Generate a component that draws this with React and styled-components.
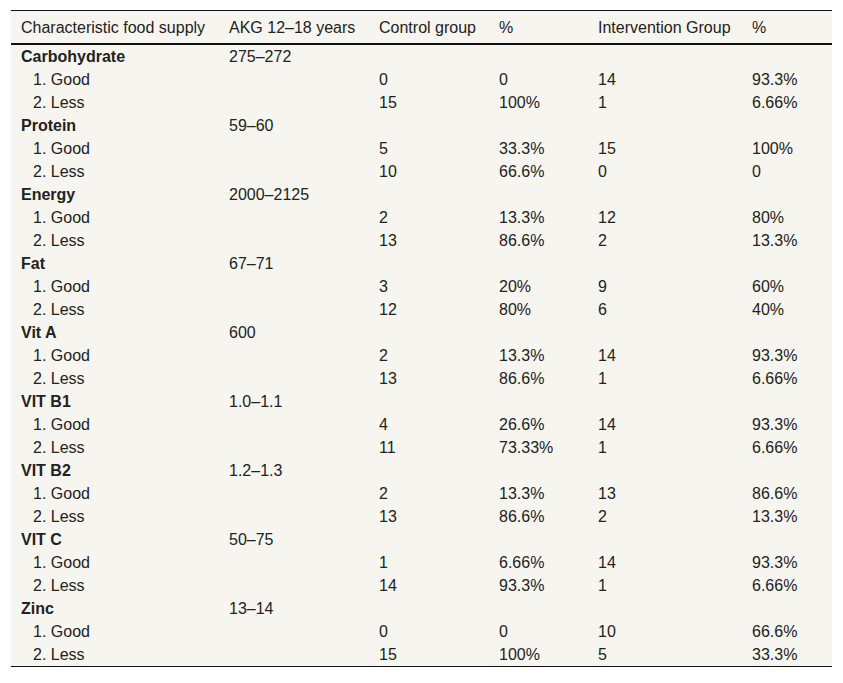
import React from 'react'
import styled, { createGlobalStyle } from 'styled-components'

const nutrients = [
  { name: 'Carbohydrate', akg: '275–272', good: ['0', '0', '14', '93.3%'], less: ['15', '100%', '1', '6.66%'] },
  { name: 'Protein', akg: '59–60', good: ['5', '33.3%', '15', '100%'], less: ['10', '66.6%', '0', '0'] },
  { name: 'Energy', akg: '2000–2125', good: ['2', '13.3%', '12', '80%'], less: ['13', '86.6%', '2', '13.3%'] },
  { name: 'Fat', akg: '67–71', good: ['3', '20%', '9', '60%'], less: ['12', '80%', '6', '40%'] },
  { name: 'Vit A', akg: '600', good: ['2', '13.3%', '14', '93.3%'], less: ['13', '86.6%', '1', '6.66%'] },
  { name: 'VIT B1', akg: '1.0–1.1', good: ['4', '26.6%', '14', '93.3%'], less: ['11', '73.33%', '1', '6.66%'] },
  { name: 'VIT B2', akg: '1.2–1.3', good: ['2', '13.3%', '13', '86.6%'], less: ['13', '86.6%', '2', '13.3%'] },
  { name: 'VIT C', akg: '50–75', good: ['1', '6.66%', '14', '93.3%'], less: ['14', '93.3%', '1', '6.66%'] },
  { name: 'Zinc', akg: '13–14', good: ['0', '0', '10', '66.6%'], less: ['15', '100%', '5', '33.3%'] },
]

const widths = [208, 150, 120, 99, 154, 90]
const headers = ['Characteristic food supply', 'AKG 12–18 years', 'Control group', '%', 'Intervention Group', '%']

const App = () => {
  return (
    <>
      <GlobalStyle />
      <Table>
        <colgroup>
          {widths.map((w, i) => <col key={i} style={{ width: w }} />)}
        </colgroup>
        <thead>
          <tr>
            {headers.map((h, i) => <Th key={i}>{h}</Th>)}
          </tr>
        </thead>
        <tbody>
          {nutrients.map(n => (
            <React.Fragment key={n.name}>
              <tr>
                <Td bold>{n.name}</Td>
                <Td>{n.akg}</Td>
                <Td /><Td /><Td /><Td />
              </tr>
              <tr>
                <Td indent>1. Good</Td>
                <Td />
                {n.good.map((v, i) => <Td key={i}>{v}</Td>)}
              </tr>
              <tr>
                <Td indent>2. Less</Td>
                <Td />
                {n.less.map((v, i) => <Td key={i}>{v}</Td>)}
              </tr>
            </React.Fragment>
          ))}
        </tbody>
      </Table>
    </>
  )
}

const GlobalStyle = createGlobalStyle`
  body {
    margin: 0;
    background: #fff;
    font-family: 'Liberation Sans', Arial, sans-serif;
  }
`

const Table = styled.table`
  margin: 10px 0 0 11px;
  width: 821px;
  table-layout: fixed;
  border-collapse: collapse;
  background: #f7f5ef;
  font-family: 'Liberation Sans', Arial, sans-serif;
  font-size: 16px;
  color: #222;
  border-top: 1px solid #111;
  border-bottom: 1px solid #111;
`

const Th = styled.th`
  height: 30px;
  padding: 2px 0 0 10px;
  text-align: left;
  font-weight: normal;
  white-space: nowrap;
  border-bottom: 2px solid #111;
`

const Td = styled.td`
  height: 23px;
  padding: 0 0 0 ${p => (p.indent ? 22 : 10)}px;
  font-weight: ${p => (p.bold ? 'bold' : 'normal')};
  white-space: nowrap;
  line-height: 18px;
`

export default App
